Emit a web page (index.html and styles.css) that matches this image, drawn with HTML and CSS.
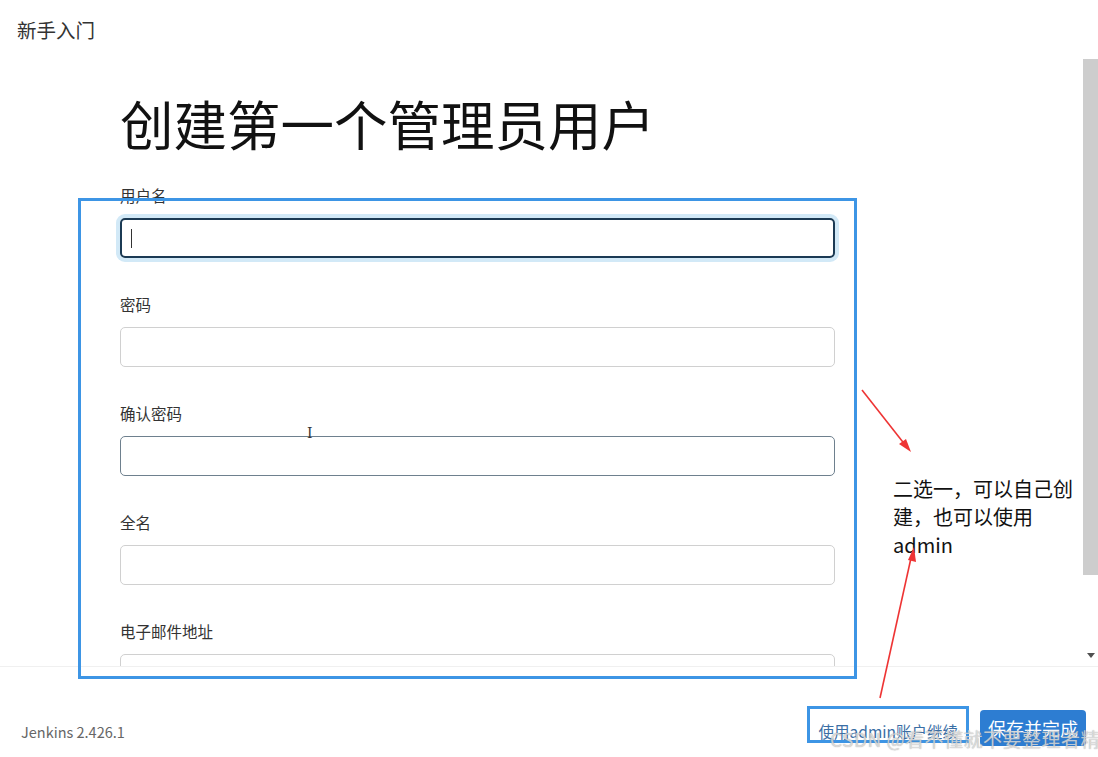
FILE: index.html
```html
<!DOCTYPE html>
<html lang="zh-CN">
<head>
  <meta charset="UTF-8" />
  <title>新手入门</title>
  <link rel="stylesheet" href="styles.css">
</head>
<body>

  <div class="dialog">
    <div class="header">新手入门</div>

    <div class="main">
      <div class="scroll-content">
        <h1>创建第一个管理员用户</h1>

        <div class="field">
          <label>用户名</label>
          <div class="input focused"><span class="caret"></span></div>
        </div>
        <div class="field">
          <label>密码</label>
          <div class="input"></div>
        </div>
        <div class="field">
          <label>确认密码</label>
          <div class="input hovered"><span class="ibeam">I</span></div>
        </div>
        <div class="field">
          <label>全名</label>
          <div class="input"></div>
        </div>
        <div class="field">
          <label>电子邮件地址</label>
          <div class="input"></div>
        </div>
      </div>

      <div class="scrollbar">
        <div class="thumb"></div>
        <div class="arrow-down"></div>
      </div>
    </div>

    <div class="footer">
      <span class="version">Jenkins 2.426.1</span>
      <div class="actions">
        <a class="skip-link">使用admin账户继续</a>
        <button class="save-btn">保存并完成</button>
      </div>
    </div>
  </div>

  <!-- annotations drawn on top of the screenshot -->
  <div class="mark mark-form"></div>
  <div class="mark mark-link"></div>
  <div class="note">二选一，可以自己创<br>建，也可以使用<br>admin</div>
  <svg class="arrows" width="1098" height="757" viewBox="0 0 1098 757">
    <g stroke="#ee3434" stroke-width="1.6" fill="#ee3434">
      <line x1="862" y1="390" x2="906" y2="446" />
      <polygon points="911,452 899,444 906,439" stroke="none" />
      <line x1="880" y1="698" x2="911" y2="558" />
      <polygon points="914,547 916,562 908,560" stroke="none" />
    </g>
  </svg>
  <div class="watermark">CSDN @看不懂就不要整理者精</div>

</body>
</html>
```

FILE: styles.css
```css
* {
  margin: 0;
  padding: 0;
  box-sizing: border-box;
}

html, body {
  height: 100%;
  background: #fff;
  font-family: "Noto Sans CJK SC", "Noto Sans", sans-serif;
  color: #333;
  overflow: hidden;
}

.dialog {
  height: 757px;
  display: flex;
  flex-direction: column;
}

.header {
  height: 59px;
  padding: 16px 0 0 17px;
  font-size: 19.5px;
  line-height: 28px;
  color: #333;
}

.main {
  flex: 1;
  display: flex;
  overflow: hidden;
  min-height: 0;
}

.scroll-content {
  flex: 1;
  padding: 28px 0 0 120px;
  overflow: hidden;
}

.scroll-content h1 {
  font-size: 53.5px;
  font-weight: 400;
  line-height: 72px;
  color: #111;
  margin-bottom: 26px;
}

.field {
  width: 715px;
  margin-bottom: 36px;
}

.field label {
  display: block;
  font-size: 15.5px;
  line-height: 20px;
  color: #333;
  margin-bottom: 13px;
}

.input {
  height: 40px;
  border: 1px solid #d0d0d0;
  border-radius: 5px;
  position: relative;
}

.input.focused {
  border: 2px solid #1b3a54;
  box-shadow: 0 0 0 4px #d2e9f7;
}

.input.hovered {
  border: 1.5px solid #6e808e;
}

.caret {
  position: absolute;
  left: 9px;
  top: 9px;
  width: 1px;
  height: 19px;
  background: #333;
}

.ibeam {
  position: absolute;
  left: 186px;
  top: -12px;
  font-family: "DejaVu Serif", serif;
  font-size: 14px;
  color: #333;
}

.scrollbar {
  width: 15px;
  display: flex;
  flex-direction: column;
  align-items: center;
}

.thumb {
  width: 15px;
  height: 516px;
  background: #cdcdcd;
}

.arrow-down {
  margin-top: 78px;
  width: 0;
  height: 0;
  border-left: 4px solid transparent;
  border-right: 4px solid transparent;
  border-top: 5px solid #505050;
}

.footer {
  height: 91px;
  border-top: 1px solid #f0f0f0;
  display: flex;
  justify-content: space-between;
  align-items: center;
  padding: 32px 12px 0 21px;
}

.version {
  font-size: 14.5px;
  color: #666;
  margin-top: 6px;
}

.actions {
  display: flex;
  align-items: center;
  gap: 22px;
}

.skip-link {
  font-size: 15.5px;
  color: #3a6ea5;
  margin-top: 6px;
}

.save-btn {
  width: 106px;
  height: 36px;
  background: #2d7dd2;
  color: #fff;
  border: none;
  border-radius: 4px;
  font-family: inherit;
  font-size: 18px;
}

/* annotations */
.mark {
  position: absolute;
  border: 3px solid #3d95e5;
}

.mark-form {
  left: 78px;
  top: 198px;
  width: 779px;
  height: 481px;
}

.mark-link {
  left: 807px;
  top: 706px;
  width: 162px;
  height: 37px;
}

.note {
  position: absolute;
  left: 893px;
  top: 475px;
  font-size: 20px;
  line-height: 28px;
  color: #111;
}

.arrows {
  position: absolute;
  left: 0;
  top: 0;
  pointer-events: none;
}

.watermark {
  position: absolute;
  left: 830px;
  top: 726px;
  font-size: 19px;
  line-height: 26px;
  letter-spacing: 0.5px;
  color: rgba(240, 240, 240, 0.7);
  text-shadow: 0 0 1px rgba(110, 110, 110, 0.7);
  white-space: nowrap;
}
```
